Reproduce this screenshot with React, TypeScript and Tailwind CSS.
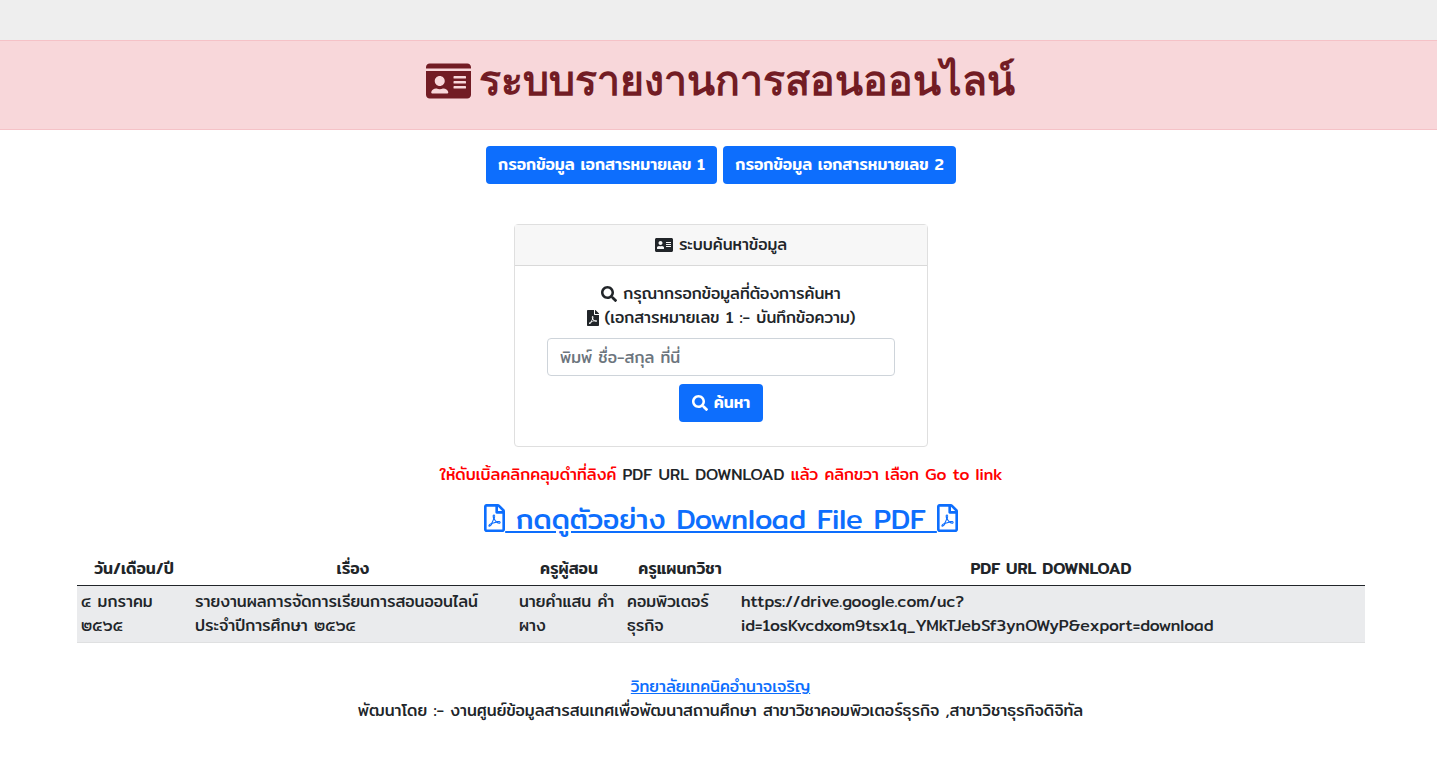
import { FaAddressCard, FaFilePdf, FaIdCard, FaRegFilePdf, FaSearch } from "react-icons/fa"

const rows = [
  {
    date: "๔ มกราคม ๒๕๖๕",
    title: "รายงานผลการจัดการเรียนการสอนออนไลน์ ประจำปีการศึกษา ๒๕๖๔",
    teacher: "นายคำแสน คำผาง",
    department: "คอมพิวเตอร์ธุรกิจ",
    url: "https://drive.google.com/uc?id=1osKvcdxom9tsx1q_YMkTJebSf3ynOWyP&export=download",
  },
]

const App = () => {
  return (
    <div className="min-h-screen bg-white font-['Mitr','Kanit','Open_Sans',sans-serif] text-base font-normal text-[#212529]">
      <div className="h-10 bg-[#eeeeee]"></div>

      {/* Banner */}
      <header className="flex h-[90px] justify-center border-y border-[#f5c2c7] bg-[#f8d7da] pt-4 pl-1 text-[#721c24]">
        <h1 className="flex h-12 items-center gap-2 whitespace-nowrap font-['Waree','DejaVu_Sans',sans-serif] text-[41px] leading-[48px] font-bold">
          <FaIdCard className="h-10 w-[45px] shrink-0" />
          ระบบรายงานการสอนออนไลน์
        </h1>
      </header>

      <main className="pr-[72px] pl-[77px] text-center">
        <div className="flex justify-center gap-1.5 pt-4">
          <button type="button" className="h-[38px] w-[231px] rounded bg-[#0d6efd] font-medium whitespace-nowrap text-white">
            กรอกข้อมูล เอกสารหมายเลข 1
          </button>
          <button type="button" className="h-[38px] w-[233px] rounded bg-[#0d6efd] font-medium whitespace-nowrap text-white">
            กรอกข้อมูล เอกสารหมายเลข 2
          </button>
        </div>

        {/* Search card */}
        <form className="mx-auto mt-10 max-w-[414px] rounded border border-[#dfdfdf]">
          <div className="flex items-center justify-center gap-1.5 border-b border-[#d9d9d9] bg-[#f7f7f7] py-2 leading-6">
            <FaAddressCard className="h-4 w-[18px]" />
            ระบบค้นหาข้อมูล
          </div>
          <div className="px-8 pt-4 pb-6">
            <label htmlFor="search" className="mb-2 block leading-6 whitespace-nowrap">
              <span className="flex items-center justify-center gap-1.5">
                <FaSearch />
                กรุณากรอกข้อมูลที่ต้องการค้นหา
              </span>
              <span className="flex items-center justify-center gap-1.5">
                <FaFilePdf className="h-4 w-3" />
                (เอกสารหมายเลข 1 :- บันทึกข้อความ)
              </span>
            </label>
            <input
              id="search"
              type="text"
              placeholder="พิมพ์ ชื่อ-สกุล ที่นี่"
              className="h-[38px] w-full rounded border border-[#ced4da] px-3 placeholder:text-[#6c757d]"
            />
            <button type="button" className="mx-auto mt-2 flex h-[38px] w-[84px] items-center justify-center gap-1.5 rounded bg-[#0d6efd] font-medium whitespace-nowrap text-white">
              <FaSearch />
              ค้นหา
            </button>
          </div>
        </form>

        <p className="mt-4 leading-6 text-[#ff0000]">
          ให้ดับเบิ้ลคลิกคลุมดำที่ลิงค์ <span className="text-[#212529]">PDF URL DOWNLOAD</span> แล้ว คลิกขวา เลือก Go to link
        </p>

        <h2 className="mt-4 mb-[18px] text-[28px] leading-8 text-[#0d6efd]">
          <a href="#" className="underline">
            <FaRegFilePdf className="inline h-7 w-[21px] align-[-3px]" /> กดดูตัวอย่าง Download File PDF <FaRegFilePdf className="inline h-7 w-[21px] align-[-3px]" />
          </a>
        </h2>

        <table className="w-full table-fixed border-collapse leading-6">
          <colgroup>
            <col className="w-[114px]" />
            <col className="w-[324px]" />
            <col className="w-[108px]" />
            <col className="w-[114px]" />
            <col />
          </colgroup>
          <thead>
            <tr className="border-b border-[#212529]">
              <th className="p-1 font-medium">วัน/เดือน/ปี</th>
              <th className="p-1 font-medium">เรื่อง</th>
              <th className="p-1 font-medium">ครูผู้สอน</th>
              <th className="p-1 font-medium">ครูแผนกวิชา</th>
              <th className="p-1 font-medium">PDF URL DOWNLOAD</th>
            </tr>
          </thead>
          <tbody>
            {rows.map((row) => (
              <tr key={row.url} className="border-b border-[#dfe0e1] bg-[#eaebed] text-left align-top">
                <td className="p-1">{row.date}</td>
                <td className="p-1">{row.title}</td>
                <td className="p-1">{row.teacher}</td>
                <td className="p-1">{row.department}</td>
                <td className="p-1">{row.url}</td>
              </tr>
            ))}
          </tbody>
        </table>
      </main>

      <footer className="py-8 pl-1 text-center leading-6">
        <a href="#" className="text-[#0d6efd] underline">วิทยาลัยเทคนิคอำนาจเจริญ</a>
        <p>พัฒนาโดย :- งานศูนย์ข้อมูลสารสนเทศเพื่อพัฒนาสถานศึกษา สาขาวิชาคอมพิวเตอร์ธุรกิจ ,สาขาวิชาธุรกิจดิจิทัล</p>
      </footer>
    </div>
  )
}

export default App
